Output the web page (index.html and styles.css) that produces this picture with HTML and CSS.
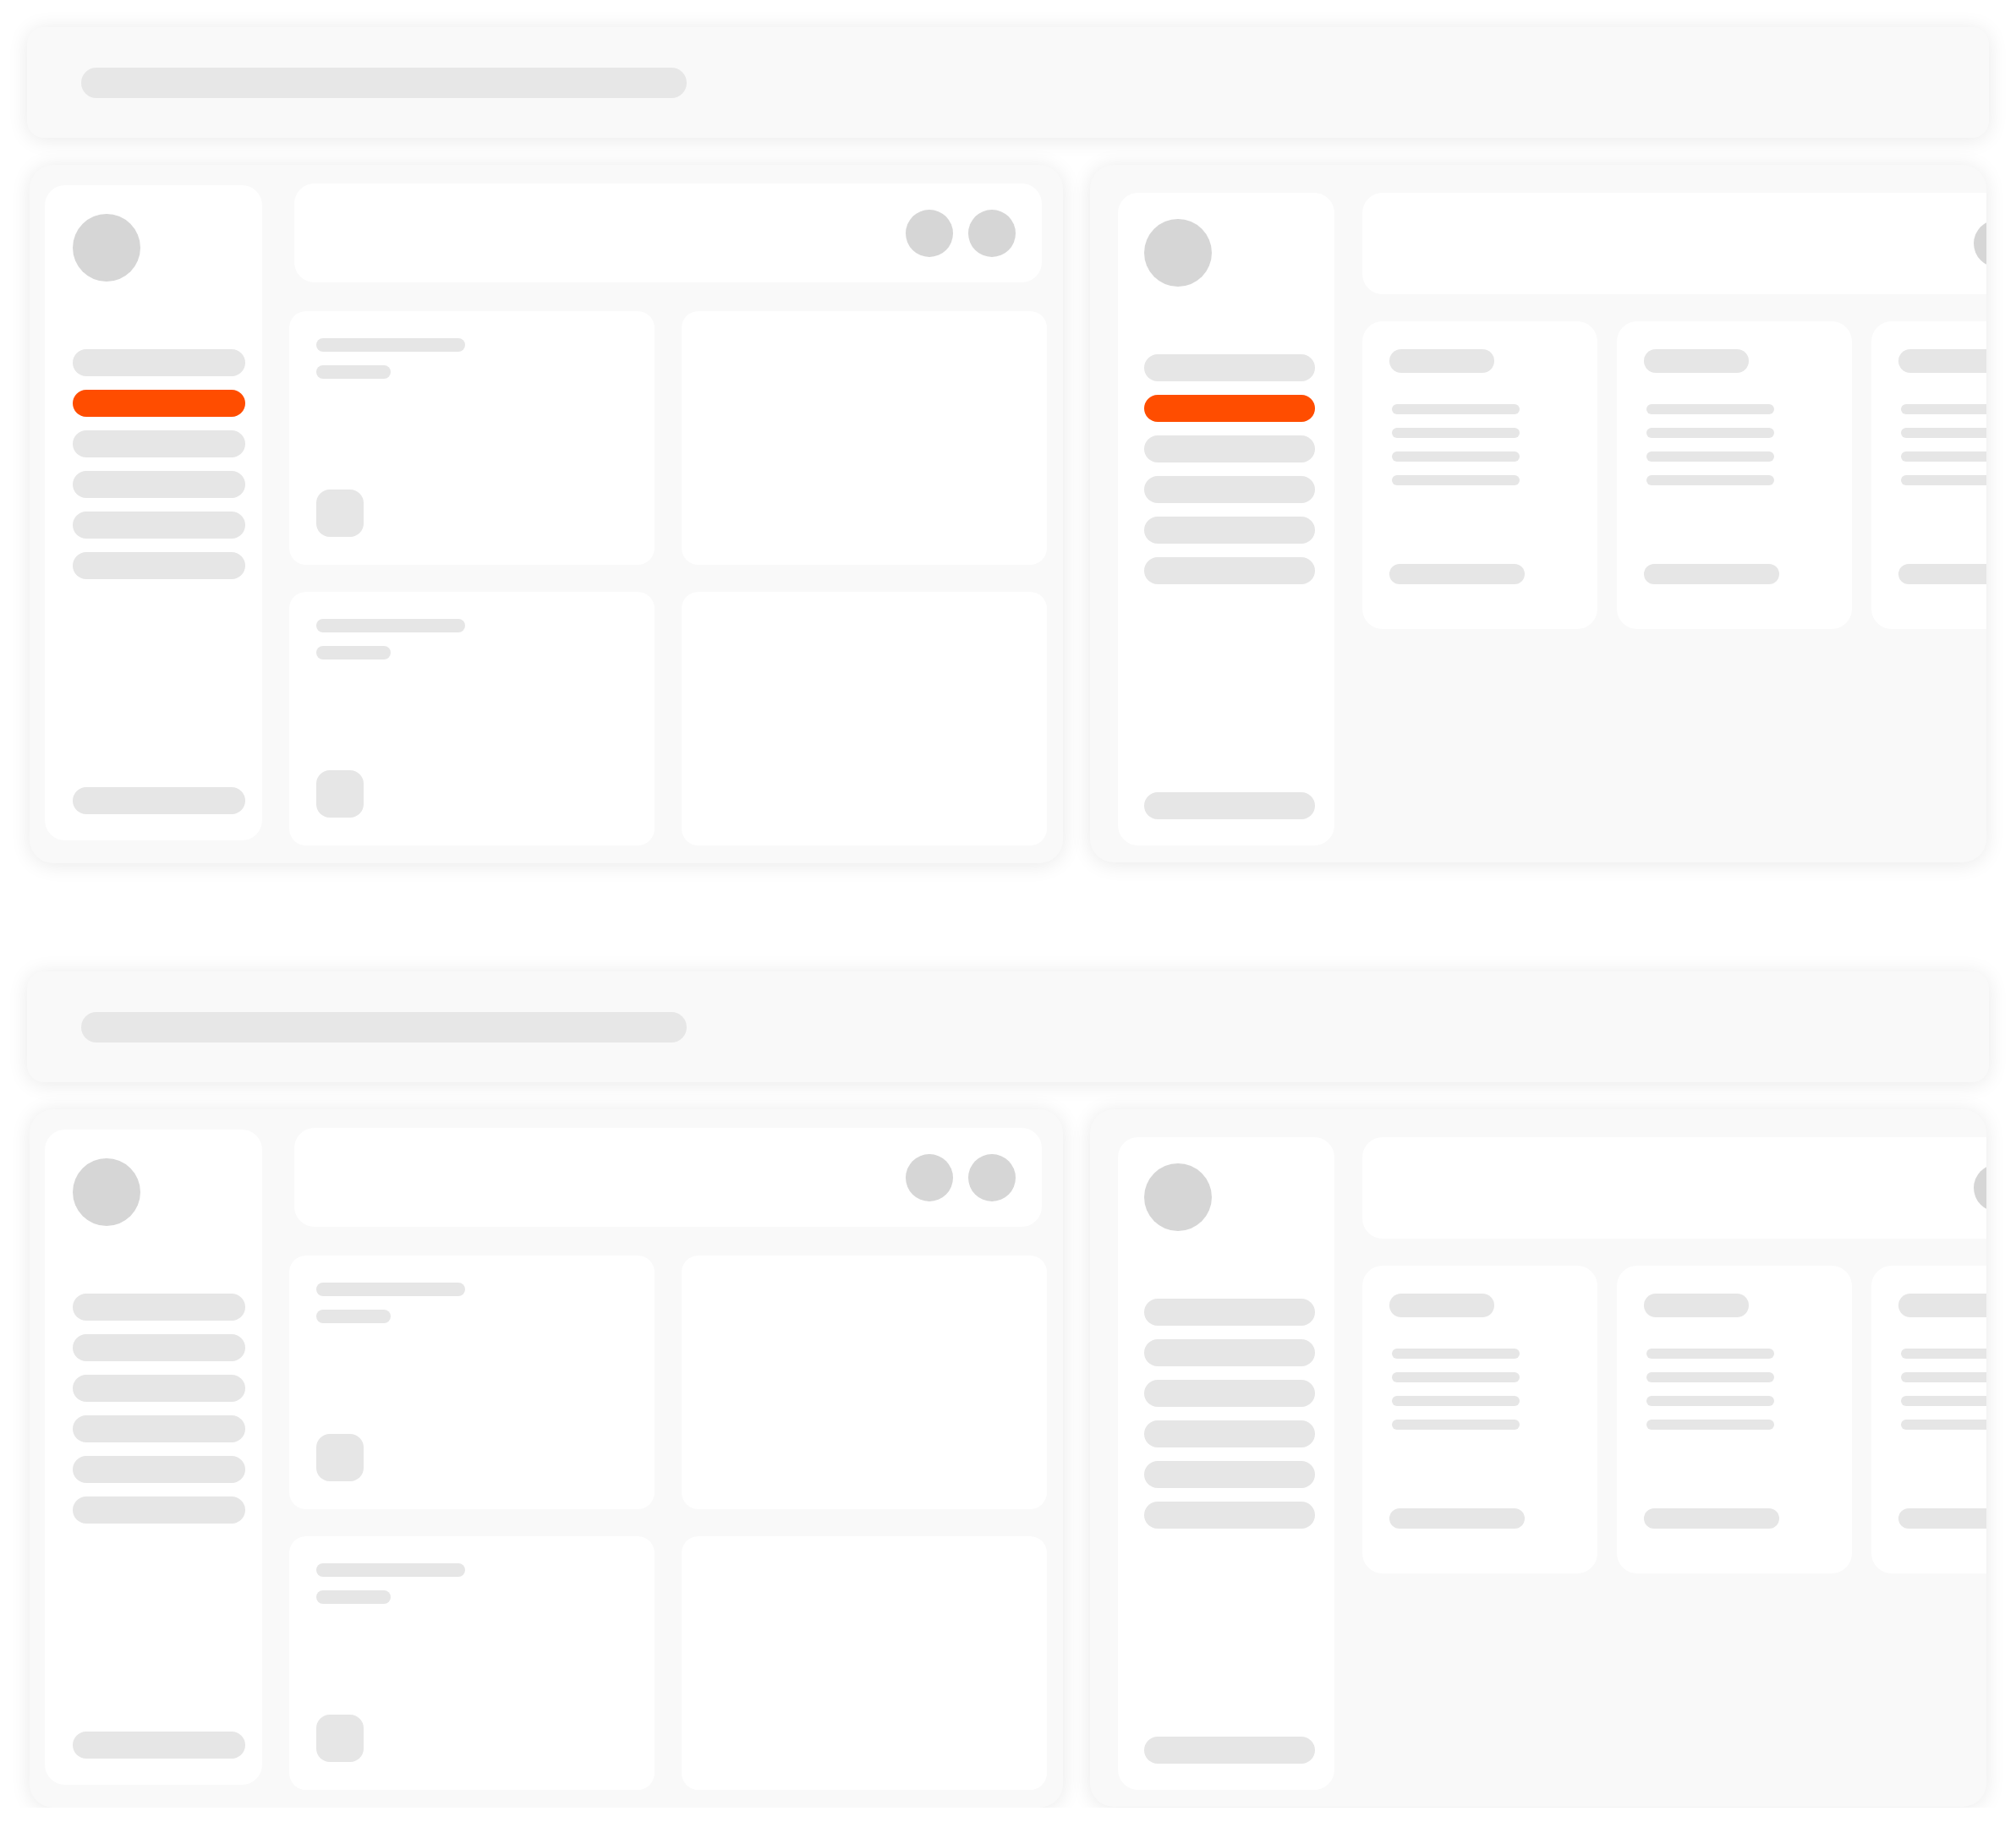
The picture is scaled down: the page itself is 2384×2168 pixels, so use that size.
FILE: index.html
```html
<!DOCTYPE html>
<html lang="en">
<head>
<meta charset="utf-8">
<title>Layout skeletons</title>
<link rel="stylesheet" href="styles.css">
</head>
<body>
<div class="page">

  <section class="showcase">
    <div class="banner"><div class="banner-pill"></div></div>
    <div class="frames">
      <div class="frame frame-desktop">
        <aside class="side side-d">
          <div class="avatar"></div>
          <nav class="nav">
            <div class="nav-item"></div>
            <div class="nav-item active"></div>
            <div class="nav-item"></div>
            <div class="nav-item"></div>
            <div class="nav-item"></div>
            <div class="nav-item"></div>
          </nav>
          <div class="nav-item nav-bottom"></div>
        </aside>
        <div class="main-d">
          <div class="topbar topbar-d"><span class="dot"></span><span class="dot"></span></div>
          <div class="grid-d">
            <div class="tile"><div class="bar bar-lg"></div><div class="bar bar-sm"></div><div class="tile-icon"></div></div>
            <div class="tile"></div>
            <div class="tile"><div class="bar bar-lg"></div><div class="bar bar-sm"></div><div class="tile-icon"></div></div>
            <div class="tile"></div>
          </div>
        </div>
      </div>
      <div class="frame frame-tablet">
        <aside class="side side-t">
          <div class="avatar"></div>
          <nav class="nav">
            <div class="nav-item"></div>
            <div class="nav-item active"></div>
            <div class="nav-item"></div>
            <div class="nav-item"></div>
            <div class="nav-item"></div>
            <div class="nav-item"></div>
          </nav>
          <div class="nav-item nav-bottom"></div>
        </aside>
        <div class="main-t">
          <div class="topbar topbar-t"><span class="dot"></span><span class="dot"></span></div>
          <div class="cols-t">
            <div class="col"><div class="col-head"></div><div class="col-lines"><div class="col-line"></div><div class="col-line"></div><div class="col-line"></div><div class="col-line"></div></div><div class="col-foot"></div></div>
            <div class="col"><div class="col-head"></div><div class="col-lines"><div class="col-line"></div><div class="col-line"></div><div class="col-line"></div><div class="col-line"></div></div><div class="col-foot"></div></div>
            <div class="col"><div class="col-head"></div><div class="col-lines"><div class="col-line"></div><div class="col-line"></div><div class="col-line"></div><div class="col-line"></div></div><div class="col-foot"></div></div>
          </div>
        </div>
      </div>
    </div>
  </section>

  <section class="showcase">
    <div class="banner"><div class="banner-pill"></div></div>
    <div class="frames">
      <div class="frame frame-desktop">
        <aside class="side side-d">
          <div class="avatar"></div>
          <nav class="nav">
            <div class="nav-item"></div>
            <div class="nav-item"></div>
            <div class="nav-item"></div>
            <div class="nav-item"></div>
            <div class="nav-item"></div>
            <div class="nav-item"></div>
          </nav>
          <div class="nav-item nav-bottom"></div>
        </aside>
        <div class="main-d">
          <div class="topbar topbar-d"><span class="dot"></span><span class="dot"></span></div>
          <div class="grid-d">
            <div class="tile"><div class="bar bar-lg"></div><div class="bar bar-sm"></div><div class="tile-icon"></div></div>
            <div class="tile"></div>
            <div class="tile"><div class="bar bar-lg"></div><div class="bar bar-sm"></div><div class="tile-icon"></div></div>
            <div class="tile"></div>
          </div>
        </div>
      </div>
      <div class="frame frame-tablet">
        <aside class="side side-t">
          <div class="avatar"></div>
          <nav class="nav">
            <div class="nav-item"></div>
            <div class="nav-item"></div>
            <div class="nav-item"></div>
            <div class="nav-item"></div>
            <div class="nav-item"></div>
            <div class="nav-item"></div>
          </nav>
          <div class="nav-item nav-bottom"></div>
        </aside>
        <div class="main-t">
          <div class="topbar topbar-t"><span class="dot"></span><span class="dot"></span></div>
          <div class="cols-t">
            <div class="col"><div class="col-head"></div><div class="col-lines"><div class="col-line"></div><div class="col-line"></div><div class="col-line"></div><div class="col-line"></div></div><div class="col-foot"></div></div>
            <div class="col"><div class="col-head"></div><div class="col-lines"><div class="col-line"></div><div class="col-line"></div><div class="col-line"></div><div class="col-line"></div></div><div class="col-foot"></div></div>
            <div class="col"><div class="col-head"></div><div class="col-lines"><div class="col-line"></div><div class="col-line"></div><div class="col-line"></div><div class="col-line"></div></div><div class="col-foot"></div></div>
          </div>
        </div>
      </div>
    </div>
  </section>

</div>
</body>
</html>
```

FILE: styles.css
```css
html, body {
  margin: 0;
  background: #ffffff;
  font-family: "Liberation Sans", Arial, sans-serif;
}

.page {
  padding: 32px 32px 0 32px;
  display: flex;
  flex-direction: column;
  gap: 128px;
}

.showcase {
  display: flex;
  flex-direction: column;
  gap: 32px;
}

/* banner */
.banner {
  height: 131px;
  box-sizing: border-box;
  padding: 0 64px;
  background: #f9f9f9;
  border-radius: 20px;
  box-shadow: 0 2px 24px rgba(0, 0, 0, 0.09);
  display: flex;
  align-items: center;
}

.banner-pill {
  width: 716px;
  height: 36px;
  border-radius: 18px;
  background: #e7e7e7;
}

/* frames */
.frames {
  display: flex;
  gap: 32px;
  padding: 0 3px;
}

.frame {
  height: 826px;
  box-sizing: border-box;
  background: #f9f9f9;
  border-radius: 28px;
  box-shadow: 0 2px 24px rgba(0, 0, 0, 0.09);
  overflow: hidden;
  display: flex;
  align-items: flex-start;
  flex-shrink: 0;
}

.frame-desktop {
  width: 1222px;
  padding: 22px 19px 0 18px;
}

.frame-tablet {
  width: 1060px;
  height: 825px;
  padding: 33px 0 0 33px;
}

/* sidebar */
.side {
  background: #ffffff;
  border-radius: 24px;
  box-sizing: border-box;
  display: flex;
  flex-direction: column;
  flex-shrink: 0;
}

.side-d {
  width: 257px;
  height: 775px;
  margin-top: 2px;
  padding: 34px 20px 31px 33px;
}

.side-t {
  width: 256px;
  height: 772px;
  padding: 31px 23px 31px 31px;
}

.avatar {
  width: 80px;
  height: 80px;
  border-radius: 50%;
  background: #d6d6d6;
}

.nav {
  margin-top: 80px;
  display: flex;
  flex-direction: column;
  gap: 16px;
}

.nav-item {
  height: 32px;
  border-radius: 16px;
  background: #e6e6e6;
}

.nav-item.active {
  background: #ff4d00;
}

.nav-bottom {
  margin-top: auto;
}

/* top bar */
.topbar {
  background: #ffffff;
  border-radius: 24px;
  box-sizing: border-box;
  display: flex;
  align-items: center;
  justify-content: flex-end;
  gap: 18px;
  padding-right: 31px;
}

.dot {
  width: 56px;
  height: 56px;
  border-radius: 50%;
  background: #d6d6d6;
  flex-shrink: 0;
}

/* desktop main */
.main-d {
  width: 896px;
  margin-left: 32px;
  flex-shrink: 0;
}

.topbar-d {
  height: 117px;
  margin: 0 6px;
}

.grid-d {
  margin-top: 34px;
  display: grid;
  grid-template-columns: 432px 432px;
  grid-auto-rows: 300px;
  gap: 32px;
}

.tile {
  background: #ffffff;
  border-radius: 20px;
  box-sizing: border-box;
  padding: 32px 32px 33px 32px;
  display: flex;
  flex-direction: column;
  align-items: flex-start;
}

.bar {
  height: 16px;
  border-radius: 8px;
  background: #e6e6e6;
}

.bar-lg {
  width: 176px;
}

.bar-sm {
  width: 88px;
  margin-top: 16px;
}

.tile-icon {
  margin-top: auto;
  width: 56px;
  height: 56px;
  border-radius: 16px;
  background: #e6e6e6;
}

/* tablet main */
.main-t {
  width: 884px;
  margin-left: 33px;
  flex-shrink: 0;
}

.topbar-t {
  height: 120px;
}

.cols-t {
  margin-top: 32px;
  display: flex;
  gap: 23px;
}

.col {
  width: 278px;
  height: 364px;
  flex-shrink: 0;
  background: #ffffff;
  border-radius: 24px;
  box-sizing: border-box;
  padding: 33px 32px;
  display: flex;
  flex-direction: column;
  align-items: flex-start;
}

.col-head {
  width: 124px;
  height: 28px;
  border-radius: 14px;
  background: #e6e6e6;
}

.col-lines {
  margin: 37px 0 0 3px;
  display: flex;
  flex-direction: column;
  gap: 16px;
}

.col-line {
  width: 151px;
  height: 12px;
  border-radius: 6px;
  background: #e6e6e6;
}

.col-foot {
  margin-top: 93px;
  width: 160px;
  height: 24px;
  border-radius: 12px;
  background: #e6e6e6;
}
```
